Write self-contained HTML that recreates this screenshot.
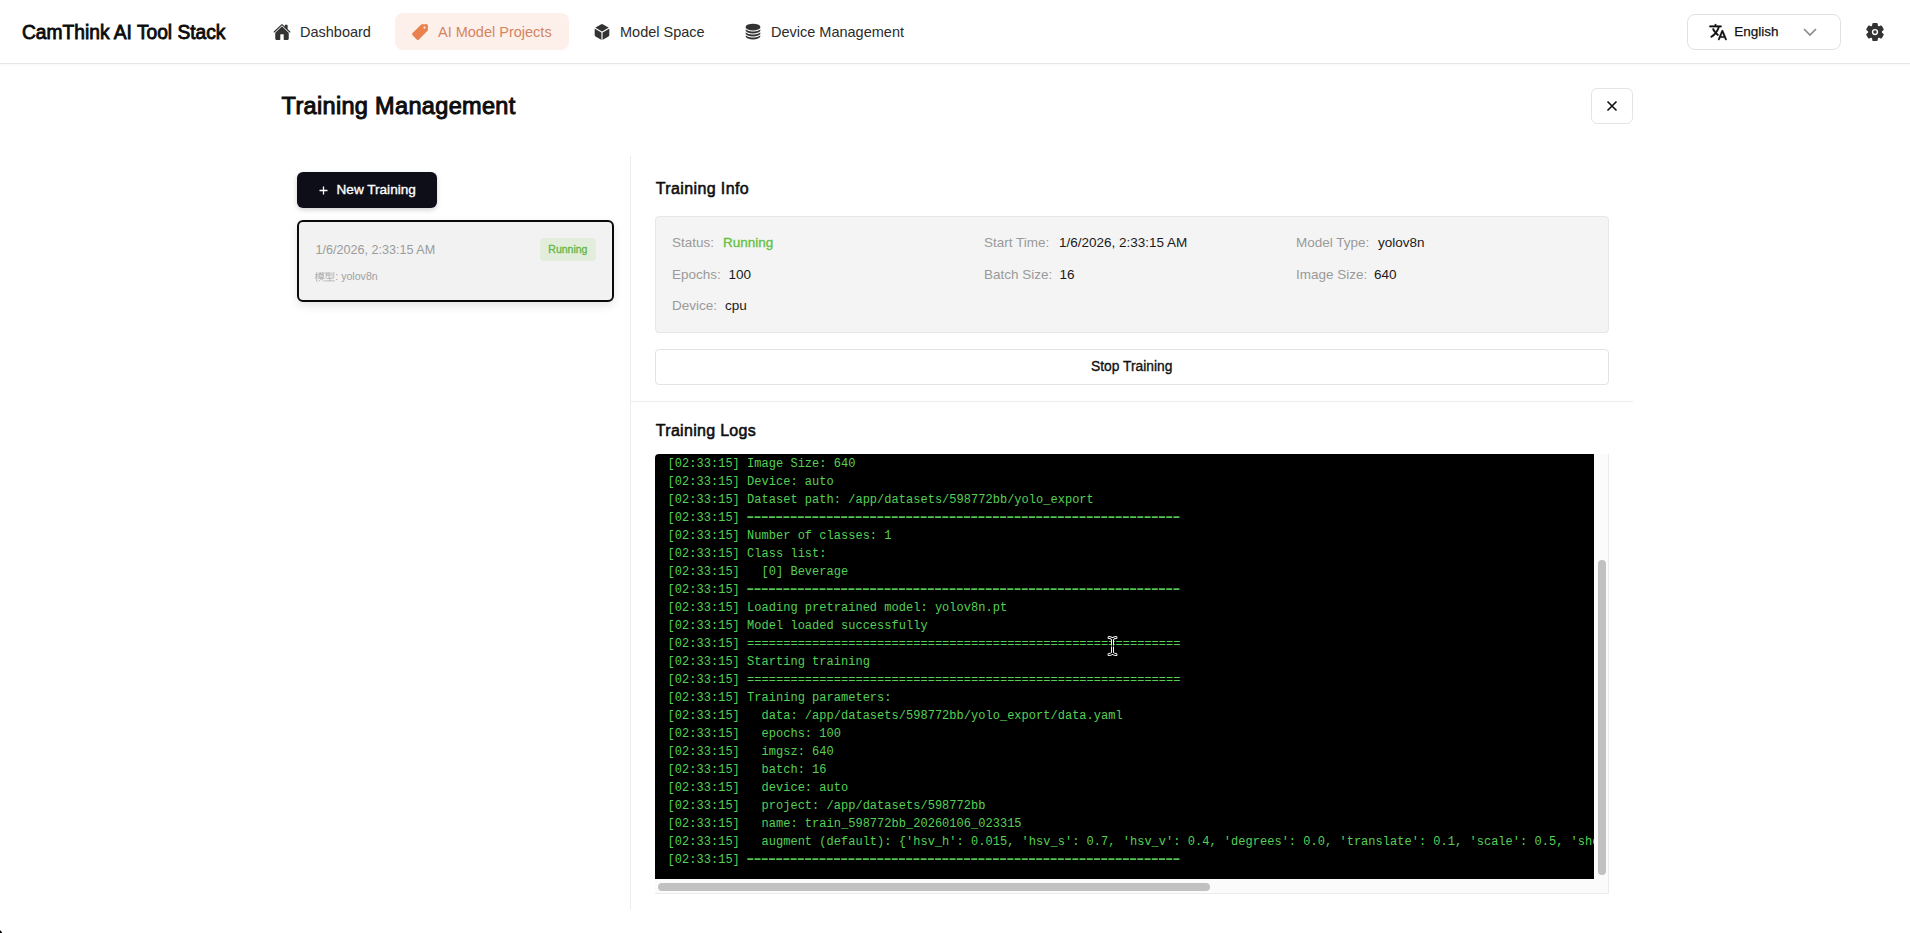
<!DOCTYPE html>
<html><head><meta charset="utf-8">
<style>
html,body{margin:0;padding:0;background:#fff;width:1910px;height:933px;overflow:hidden;}
body{font-family:"Liberation Sans",sans-serif;color:#111;position:relative;}
.a{position:absolute;white-space:nowrap;line-height:1;}
svg{position:absolute;display:block;}
.hdr{position:absolute;left:0;top:0;width:1910px;height:63px;border-bottom:1px solid #e6e6e6;background:#fff;box-shadow:0 1px 3px rgba(0,0,0,0.035);}
.nav{font-size:14.5px;color:#2b2b2b;}
.lbl{font-size:13.5px;color:#9a9a9a;}
.val{font-size:13.5px;color:#1a1a1a;}
.log{position:absolute;left:655px;top:454px;width:939px;height:425px;background:#000;overflow:hidden;border-top-left-radius:4px;}
.dsh{display:inline-block;vertical-align:top;height:18px;color:transparent;background:linear-gradient(90deg,#50c450 0,#50c450 6px,transparent 6px) repeat-x 0 7px/7.2px 2px;}
.log pre{margin:0;position:absolute;left:12.6px;top:1px;font-family:"Liberation Mono",monospace;font-size:12px;letter-spacing:0.023px;line-height:18px;color:#56d056;white-space:pre;}
</style></head>
<body>
<!-- header -->
<div class="hdr"></div>
<div class="a" style="left:21.5px;top:22px;font-size:20px;color:#0b0b0b;-webkit-text-stroke:0.85px #0b0b0b;transform:scaleX(0.96);transform-origin:0 0;">CamThink AI Tool Stack</div>

<!-- Dashboard -->
<svg style="left:273px;top:23px" width="18" height="18" viewBox="0 0 512 512"><path fill="#333" d="M261.56 101.28a8 8 0 00-11.06 0L66.4 277.15a8 8 0 00-2.47 5.79L63.9 448a32 32 0 0032 32H192a16 16 0 0016-16V328a8 8 0 018-8h80a8 8 0 018 8v136a16 16 0 0016 16h96.06a32 32 0 0032-32V282.94a8 8 0 00-2.47-5.79z"/><path fill="#333" d="M490.91 244.15l-74.8-71.56V64a16 16 0 00-16-16h-48a16 16 0 00-16 16v32l-57.92-55.38C272.77 35.14 264.71 32 256 32c-8.68 0-16.72 3.14-22.14 8.63l-212.7 203.5c-6.22 6-7 15.87-1.34 22.37A16 16 0 0043 267.56L250.5 69.28a8 8 0 0111.06 0l207.52 198.28a16 16 0 0022.59-.44c6.14-6.36 5.63-16.86-.76-22.97z"/></svg>
<div class="a nav" style="left:300px;top:24.7px;">Dashboard</div>

<!-- AI Model Projects active -->
<div style="position:absolute;left:395px;top:13px;width:174px;height:37px;border-radius:8px;background:#fdf0eb;"></div>
<svg style="left:411px;top:23px" width="18" height="18" viewBox="0 0 512 512"><path fill="#e8814e" d="M467 45.2A44.45 44.45 0 00435.29 32H312.36a30.63 30.63 0 00-21.52 8.89L45.09 286.59a44.82 44.82 0 000 63.32l117 117a44.83 44.83 0 0063.34 0l245.65-245.6A30.6 30.6 0 00480 199.8v-123a44.24 44.24 0 00-13-31.6zM384 160a32 32 0 1132-32 32 32 0 01-32 32z"/></svg>
<div class="a nav" style="left:438px;top:24.7px;color:#d4845e;">AI Model Projects</div>

<!-- Model Space -->
<svg style="left:593px;top:23px" width="18" height="18" viewBox="0 0 512 512"><path fill="#333" d="M440.9 136.3a4 4 0 000-6.91L288.16 40.65a64.14 64.14 0 00-64.33 0L71.12 129.39a4 4 0 000 6.91L254 243.88a4 4 0 004.06 0zM54 163.51a4 4 0 00-6 3.49v173.89a48 48 0 0023.84 41.39L234 479.51a4 4 0 006-3.46V274.3a4 4 0 00-2-3.46zM272 275v201a4 4 0 006 3.46l162.15-97.23A48 48 0 00464 340.89V167a4 4 0 00-6-3.45l-184 108a4 4 0 00-2 3.45z"/></svg>
<div class="a nav" style="left:620px;top:24.7px;">Model Space</div>

<!-- Device Management -->
<svg style="left:744px;top:22px" width="18" height="19" viewBox="0 16 512 480"><g fill="#333"><path d="M256 428c-52.35 0-111.39-11.61-157.93-31-17.07-7.19-31.690-18.820-43.640-28a4 4 0 00-6.43 3.18v12.58c0 28.07 23.49 53.22 66.14 70.82C152.29 471.33 202.67 480 256 480s103.7-8.67 141.86-24.42C440.51 438 464 412.830 464 384.760v-12.58a4 4 0 00-6.43-3.18c-11.95 9.17-26.57 20.81-43.65 28-46.54 19.39-105.57 31-157.92 31z"/><path d="M464 126.51c-.81-27.65-24.18-52.4-66-69.85C359.74 40.76 309.34 32 256 32s-103.74 8.76-141.91 24.66c-41.78 17.41-65.15 42.11-66 69.69L48 144c0 6.41 5.2 16.48 14.63 24.73 11.13 9.73 27.65 19.33 47.78 27.74C153.24 214.36 207.670 225 256 225s102.76-10.680 145.59-28.57c20.13-8.41 36.65-18 47.78-27.74C458.8 160.49 464 150.42 464 144z"/><path d="M413.92 226.59C360.06 248.46 302.85 256 256 256s-104.06-7.54-157.92-29.41c-17.07-7.19-31.69-18.82-43.64-28A4 4 0 0048 201.76V232c0 6.41 5.2 14.48 14.63 22.73 11.13 9.74 27.65 19.33 47.78 27.74C153.24 300.34 207.67 311 256 311s102.76-10.68 145.59-28.57c20.13-8.41 36.65-18 47.78-27.74C458.8 246.47 464 238.41 464 232v-30.24a4 4 0 00-6.43-3.18c-11.95 9.17-26.57 20.81-43.650 28.01z"/><path d="M413.92 312c-53.86 21.87-111.07 29.4-157.92 29.4s-104.06-7.54-157.92-29.41c-17.07-7.19-31.69-18.82-43.64-28A4 4 0 0048 287.17v30.27c0 6.41 5.2 14.48 14.63 22.73 11.13 9.74 27.65 19.33 47.78 27.74C153.24 385.82 207.67 396.5 256 396.5s102.76-10.68 145.59-28.57c20.13-8.41 36.65-18 47.78-27.740C458.8 331.92 464 323.86 464 317.45v-30.27a4 4 0 00-6.43-3.18c-11.95 9.17-26.57 20.81-43.65 28.02z"/></g></svg>
<div class="a nav" style="left:771px;top:24.7px;">Device Management</div>

<!-- language selector -->
<div style="position:absolute;left:1687px;top:14px;width:152px;height:34px;border:1px solid #e2e2e2;border-radius:8px;background:#fff;"></div>
<svg style="left:1707.8px;top:22px" width="20" height="20" viewBox="0 0 512 512"><path fill="#111" stroke="#111" stroke-width="5" d="M478.33 433.6l-90-218a22 22 0 00-40.67 0l-90 218a22 22 0 1040.67 16.79L316.66 406h102.67l18.33 44.39A22 22 0 00458 464a22 22 0 0020.32-30.4zM334.83 362L368 281.65 401.17 362zm-66.99-19.08a22 22 0 00-4.89-30.7c-.2-.15-15-11.13-36.49-34.730 39.650-53.680 62.110-114.750 71.270-143.490H330a22 22 0 000-44H214V70a22 22 0 00-44 0v20H54a22 22 0 000 44h197.25c-9.52 26.95-27.05 69.5-53.79 108.36-31.41-41.68-43.08-68.65-43.170-68.870a22 22 0 00-40.58 17c.58 1.38 14.55 34.23 52.86 83.930.92 1.190 1.830 2.350 2.740 3.510-39.24 44.35-77.74 71.86-93.850 80.740a22 22 0 1021.070 38.630c2.160-1.180 48.6-26.890 101.630-85.590 22.52 24.080 38 35.440 38.930 36.100a22 22 0 0030.750-4.900z"/></svg>
<div class="a" style="left:1734.3px;top:25.2px;font-size:13.5px;color:#141414;-webkit-text-stroke:0.25px #141414;">English</div>
<svg style="left:1802px;top:27px" width="16" height="10" viewBox="0 0 16 10"><path d="M2 2l6 6 6-6" fill="none" stroke="#8a8a8a" stroke-width="1.6"/></svg>

<!-- gear -->
<svg style="left:1865px;top:22px" width="20" height="20" viewBox="0 0 512 512"><path fill="#333" fill-rule="evenodd" d="M470.39 300l-.47-.38-31.56-24.75a16.11 16.11 0 01-6.1-13.33v-11.56a16 16 0 016.11-13.22L469.92 212l.47-.38a26.68 26.68 0 005.9-34.06l-42.71-73.9a1.59 1.59 0 01-.13-.22A26.86 26.86 0 00401 92.14l-.35.13-37.1 14.93a15.94 15.94 0 01-14.470-1.290q-4.92-3.1-10-5.86a15.94 15.94 0 01-8.19-11.82l-5.59-39.59-.12-.72A27.22 27.22 0 00298.76 26h-85.52a26.92 26.92 0 00-26.45 22.39l-.09.56-5.57 39.67a16 16 0 01-8.13 11.82 175.21 175.21 0 00-10 5.82 15.92 15.92 0 01-14.43 1.27l-37.13-15-.35-.14a26.87 26.87 0 00-32.48 11.34l-.13.22-42.77 73.95a26.71 26.71 0 005.9 34.1l.47.38 31.56 24.75a16.11 16.11 0 016.1 13.33v11.56a16 16 0 01-6.11 13.22L42.08 300l-.47.38a26.68 26.68 0 00-5.9 34.06l42.71 73.9a1.59 1.59 0 01.13.22 26.86 26.86 0 0032.45 11.3l.35-.13 37.07-14.93a15.94 15.94 0 0114.47 1.29q4.92 3.11 10 5.86a15.94 15.94 0 018.19 11.82l5.56 39.59.12.72A27.22 27.22 0 00213.24 486h85.52a26.92 26.92 0 0026.45-22.39l.09-.56 5.57-39.67a16 16 0 018.18-11.82c3.42-1.84 6.76-3.79 10-5.82a15.92 15.92 0 0114.43-1.27l37.13 14.95.35.14a26.85 26.85 0 0032.48-11.34 2.53 2.53 0 01.13-.22l42.71-73.89a26.7 26.7 0 00-5.89-34.11zM256 336a80 80 0 110-160 80 80 0 010 160z"/><circle cx="256" cy="256" r="44" fill="#333"/></svg>


<!-- title -->
<div class="a" style="left:281.6px;top:94.6px;font-size:23.5px;letter-spacing:0.33px;color:#0d0d0d;-webkit-text-stroke:1px #0d0d0d;">Training Management</div>
<div style="position:absolute;left:1591px;top:88px;width:40px;height:34px;border:1px solid #e4e4e4;border-radius:6px;background:#fff;"></div>
<svg style="left:1606px;top:100px" width="12" height="12" viewBox="0 0 12 12"><path d="M1.5 1.5l9 9M10.5 1.5l-9 9" stroke="#111" stroke-width="1.6" fill="none"/></svg>

<!-- left panel -->
<div style="position:absolute;left:630px;top:156px;width:1px;height:754px;background:#ececec;"></div>
<div style="position:absolute;left:297px;top:172px;width:140px;height:36px;border-radius:6px;background:#0e0e19;box-shadow:0 2px 5px rgba(0,0,0,0.18);"></div>
<svg style="left:319px;top:186px" width="9" height="9" viewBox="0 0 9 9"><path d="M4.5 0.5v8M0.5 4.5h8" stroke="#fff" stroke-width="1.3" fill="none"/></svg>
<div class="a" style="left:336.5px;top:182.7px;font-size:13.6px;color:#fff;-webkit-text-stroke:0.35px #fff;">New Training</div>

<div style="position:absolute;left:297px;top:220px;width:313px;height:78px;border:2px solid #0a0a0a;border-radius:6px;background:#f2f2f2;box-shadow:0 4px 10px rgba(0,0,0,0.10);"></div>
<div class="a" style="left:315.5px;top:244px;font-size:12.6px;color:#9b9b9b;">1/6/2026, 2:33:15 AM</div>
<div style="position:absolute;left:540px;top:238px;width:56px;height:23px;border-radius:4px;background:#e2eedb;"></div>
<div class="a" style="left:548.3px;top:244.4px;font-size:10.5px;color:#62b545;-webkit-text-stroke:0.3px #62b545;">Running</div>
<div class="a" style="left:335.3px;top:271px;font-size:10.6px;color:#a0a0a0;">: yolov8n</div>
<svg style="left:315px;top:272px" width="20" height="10" viewBox="0 0 20 10"><g stroke="#a8a8a8" stroke-width="0.75" fill="none" stroke-linecap="square" transform="scale(1 0.95)"><path d="M0.3 2.8h2.8M1.7 0.3v9.4M1.7 3.5L0.2 7M1.7 4l1.3 1.6"/><path d="M3.8 1.3h5.4M5.2 0.2v2M7.8 0.2v2M4.6 2.6h3.8v3h-3.8zM4.6 4.1h3.8M3.8 6.8h5.4M6.5 5.6v1.5L3.9 9.6M6.6 7.2l2.5 2.4"/><path d="M10.6 1.1h5M10.6 3.2h5M12 1.1v2.4l-1.2 2.2M14 1.1v4.5M17 1.2v3.6M18.8 0.3v5.3l-0.8 0.3M11.8 6.8h6M14.8 5.7v3.5M10.4 9.3h9.2"/></g></svg>


<!-- right panel -->
<div class="a" style="left:655.8px;top:181px;font-size:16px;letter-spacing:0.38px;color:#0d0d0d;-webkit-text-stroke:0.55px #0d0d0d;">Training Info</div>
<div style="position:absolute;left:655px;top:216px;width:952px;height:115px;border:1px solid #e7e7e7;border-radius:4px;background:#f4f4f4;"></div>
<div class="a lbl" style="left:672px;top:236px;">Status:</div><div class="a val" style="left:723px;top:236px;color:#63c043;-webkit-text-stroke:0.3px #63c043;">Running</div>
<div class="a lbl" style="left:984px;top:236px;">Start Time:</div><div class="a val" style="left:1059px;top:236px;">1/6/2026, 2:33:15 AM</div>
<div class="a lbl" style="left:1296px;top:236px;">Model Type:</div><div class="a val" style="left:1378px;top:236px;">yolov8n</div>
<div class="a lbl" style="left:672px;top:268px;">Epochs:</div><div class="a val" style="left:728.5px;top:268px;">100</div>
<div class="a lbl" style="left:984px;top:268px;">Batch Size:</div><div class="a val" style="left:1059.5px;top:268px;">16</div>
<div class="a lbl" style="left:1296px;top:268px;">Image Size:</div><div class="a val" style="left:1374px;top:268px;">640</div>
<div class="a lbl" style="left:672px;top:299px;">Device:</div><div class="a val" style="left:725px;top:299px;">cpu</div>

<div style="position:absolute;left:655px;top:349px;width:952px;height:34px;border:1px solid #e3e3e3;border-radius:4px;background:#fff;"></div>
<div class="a" style="left:1091px;top:359.9px;font-size:13.8px;color:#111;-webkit-text-stroke:0.35px #111;">Stop Training</div>
<div style="position:absolute;left:631px;top:401px;width:1002px;height:1px;background:#ececec;"></div>

<div class="a" style="left:655.8px;top:423.2px;font-size:16px;letter-spacing:0.3px;color:#0d0d0d;-webkit-text-stroke:0.55px #0d0d0d;">Training Logs</div>
<div style="position:absolute;left:655px;top:454px;width:953px;height:439px;border-right:1px solid #ebebeb;border-bottom:1px solid #ebebeb;background:#fbfbfb;"></div>
<div class="log"><pre>[02:33:15] Image Size: 640
[02:33:15] Device: auto
[02:33:15] Dataset path: /app/datasets/598772bb/yolo_export
[02:33:15] <svg width="433.4" height="18" style="position:static;display:inline-block;vertical-align:top" viewBox="0 0 433.4 18"><line x1="0.3" y1="8.1" x2="433.4" y2="8.1" stroke="#52c852" stroke-width="1.7" stroke-dasharray="6 1.223"/></svg>
[02:33:15] Number of classes: 1
[02:33:15] Class list:
[02:33:15]   [0] Beverage
[02:33:15] <svg width="433.4" height="18" style="position:static;display:inline-block;vertical-align:top" viewBox="0 0 433.4 18"><line x1="0.3" y1="8.1" x2="433.4" y2="8.1" stroke="#52c852" stroke-width="1.7" stroke-dasharray="6 1.223"/></svg>
[02:33:15] Loading pretrained model: yolov8n.pt
[02:33:15] Model loaded successfully
[02:33:15] ============================================================
[02:33:15] Starting training
[02:33:15] ============================================================
[02:33:15] Training parameters:
[02:33:15]   data: /app/datasets/598772bb/yolo_export/data.yaml
[02:33:15]   epochs: 100
[02:33:15]   imgsz: 640
[02:33:15]   batch: 16
[02:33:15]   device: auto
[02:33:15]   project: /app/datasets/598772bb
[02:33:15]   name: train_598772bb_20260106_023315
[02:33:15]   augment (default): {'hsv_h': 0.015, 'hsv_s': 0.7, 'hsv_v': 0.4, 'degrees': 0.0, 'translate': 0.1, 'scale': 0.5, 'shear': 0.0}
[02:33:15] <svg width="433.4" height="18" style="position:static;display:inline-block;vertical-align:top" viewBox="0 0 433.4 18"><line x1="0.3" y1="8.1" x2="433.4" y2="8.1" stroke="#52c852" stroke-width="1.7" stroke-dasharray="6 1.223"/></svg></pre></div>
<div style="position:absolute;left:1598px;top:560px;width:8px;height:315px;border-radius:4px;background:#c1c1c1;"></div>
<div style="position:absolute;left:658px;top:883px;width:552px;height:8px;border-radius:4px;background:#c1c1c1;"></div>

<svg style="left:1107px;top:636px" width="11" height="20" viewBox="0 0 11 20"><path d="M2 1.5c1.5 0 2.5.5 3.5 1.5 1-1 2-1.5 3.5-1.5M5.5 3v14M2 18.5c1.5 0 2.5-.5 3.5-1.5 1 1 2 1.5 3.5 1.5" fill="none" stroke="#fff" stroke-width="3" stroke-linecap="round"/><path d="M2 1.5c1.5 0 2.5.5 3.5 1.5 1-1 2-1.5 3.5-1.5M5.5 3v14M2 18.5c1.5 0 2.5-.5 3.5-1.5 1 1 2 1.5 3.5 1.5M4 10h3" fill="none" stroke="#000" stroke-width="1.1" stroke-linecap="round"/></svg>
<svg style="left:0;top:930px" width="4" height="3" viewBox="0 0 4 3"><path d="M0 0.3Q1 0.5 2.2 3H0z" fill="#000"/></svg>
</body></html>
